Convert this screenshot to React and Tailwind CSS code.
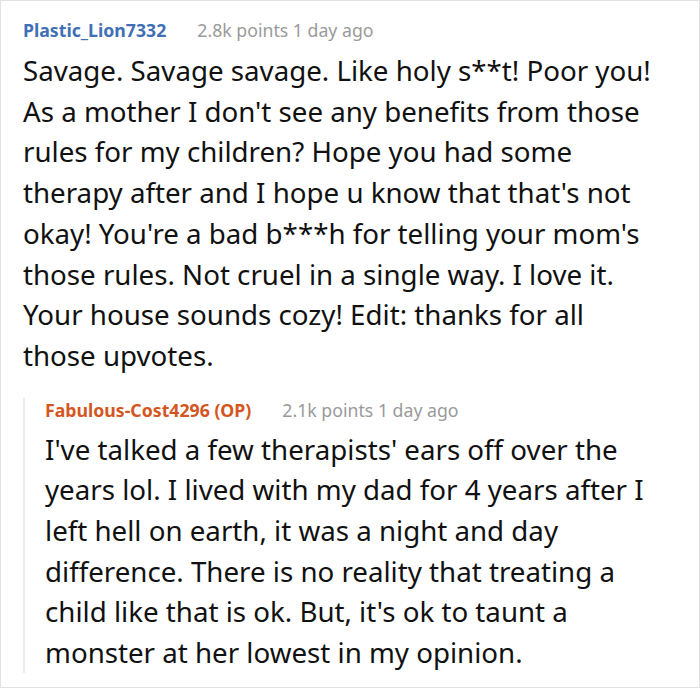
import React from "react";

const COMMENTS = {
  user: "Plastic_Lion7332",
  meta: "2.8k points 1 day ago",
  text: "Savage. Savage savage. Like holy s**t! Poor you! As a mother I don't see any benefits from those rules for my children? Hope you had some therapy after and I hope u know that that's not okay! You're a bad b***h for telling your mom's those rules. Not cruel in a single way. I love it. Your house sounds cozy! Edit: thanks for all those upvotes.",
  reply: {
    user: "Fabulous-Cost4296 (OP)",
    meta: "2.1k points 1 day ago",
    text: "I've talked a few therapists' ears off over the years lol. I lived with my dad for 4 years after I left hell on earth, it was a night and day difference. There is no reality that treating a child like that is ok. But, it's ok to taunt a monster at her lowest in my opinion.",
  },
};

const Header = ({ user, meta, color, className = "" }) => (
  <div
    className={`flex items-baseline gap-[31px] text-[17.7px] leading-[24px] ${className}`}
  >
    <span className={`font-bold ${color}`}>{user}</span>
    <span className="text-[#9a9a9a]">{meta}</span>
  </div>
);

export default function App() {
  const c = COMMENTS;
  return (
    <div
      className="w-[700px] h-[688px] bg-white border border-[#e2e2e2] overflow-hidden"
      style={{ fontFamily: '"Noto Sans", sans-serif' }}
    >
      <div className="pl-[22px] pr-[38px] pt-[17px]">
        <Header user={c.user} meta={c.meta} color="text-[#3f6fb5]" />
        <p className="mt-[8px] text-[27.7px] leading-[40.7px] text-[#111]">
          {c.text}
        </p>

        {/* reply */}
        <div className="mt-[32px] border-l-2 border-[#ececec] pl-[20px]">
          <Header
            user={c.reply.user}
            meta={c.reply.meta}
            color="text-[#d4561f]"
            className="-mt-[10px]"
          />
          <p className="mt-[7px] text-[27.7px] leading-[40.7px] text-[#111]">
            {c.reply.text}
          </p>
        </div>
      </div>
    </div>
  );
}
